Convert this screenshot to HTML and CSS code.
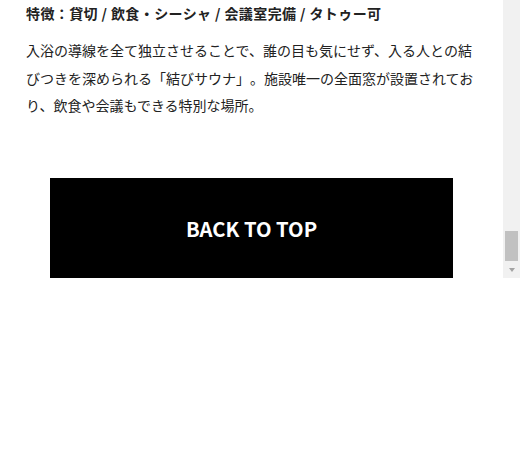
FILE: index.html
```html
<!DOCTYPE html>
<html lang="ja">
<head>
<meta charset="utf-8">
<title>Sauna</title>
<link rel="stylesheet" href="styles.css">
</head>
<body>
<div class="frame">
  <div class="viewport">
    <p class="features">特徴：貸切 / 飲食・シーシャ / 会議室完備 / タトゥー可</p>
    <p class="desc">入浴の導線を全て独立させることで、誰の目も気にせず、入る人との結びつきを深められる「結びサウナ」。施設唯一の全面窓が設置されており、飲食や会議もできる特別な場所。</p>
    <a class="back" href="#">BACK TO TOP</a>
  </div>
  <div class="scrollbar">
    <div class="thumb"></div>
    <div class="arrow"><span class="tri"></span></div>
  </div>
</div>
</body>
</html>
```
FILE: styles.css
```css
html, body {
  margin: 0;
  padding: 0;
  background: #fff;
}
body {
  font-family: "Noto Sans CJK JP", "Noto Sans", sans-serif;
  color: #222;
}
.frame {
  display: flex;
  height: 278px;
}
.viewport {
  flex: 1;
  overflow: hidden;
  display: flex;
  flex-direction: column;
  padding: 0 26px;
}
.features {
  margin: 0;
  padding-top: 1px;
  font-size: 14px;
  font-weight: 700;
  line-height: 24px;
  letter-spacing: 0.4px;
  text-spacing-trim: space-all;
}
.desc {
  margin: 12px 0 0;
  font-size: 14px;
  line-height: 27.7px;
  text-spacing-trim: space-all;
}
.back {
  display: flex;
  align-items: center;
  justify-content: center;
  align-self: center;
  width: 403px;
  height: 100px;
  margin-top: 58px;
  background: #000;
  color: #fff;
  font-size: 20.2px;
  font-weight: 700;
  text-decoration: none;
  flex-shrink: 0;
}
.scrollbar {
  width: 17px;
  background: #f1f1f1;
  display: flex;
  flex-direction: column;
  justify-content: flex-end;
}
.thumb {
  height: 30px;
  margin: 0 2px;
  background: #c1c1c1;
}
.arrow {
  height: 17px;
  display: flex;
  align-items: center;
  justify-content: center;
}
.tri {
  width: 0;
  height: 0;
  border-left: 3.5px solid transparent;
  border-right: 3.5px solid transparent;
  border-top: 4px solid #a3a3a3;
}
```
